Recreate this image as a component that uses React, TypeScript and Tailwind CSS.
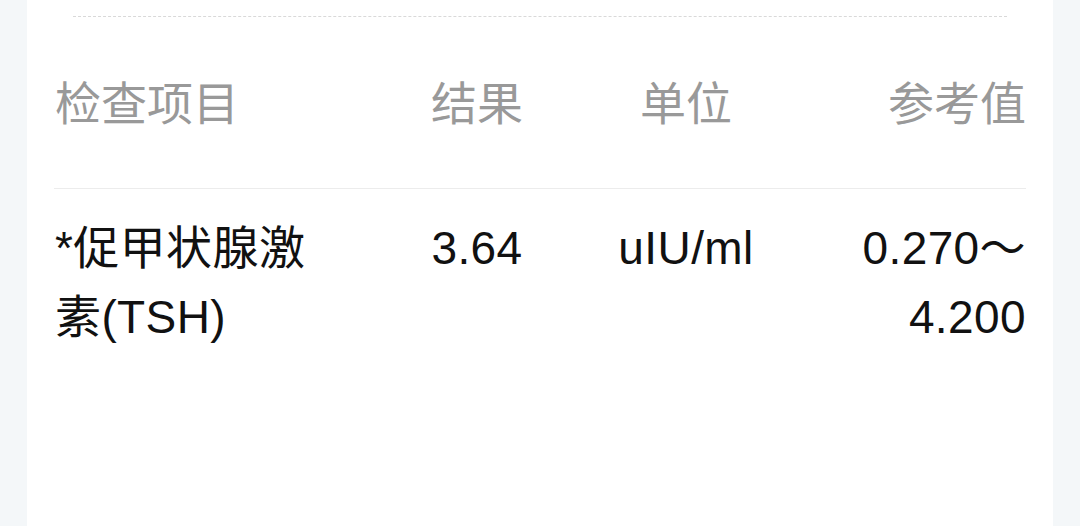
const FONT = "font-['Liberation_Sans','Noto_Sans_CJK_SC',sans-serif]";

export default function App(): React.JSX.Element {
  return (
    <div className={`flex h-[526px] w-[1080px] justify-center overflow-hidden bg-[#f4f7f9] ${FONT}`}>
      <div className="h-full w-[1026px] bg-white px-[27px]">
        <div className="mx-[19px] mt-4 border-t border-dashed border-[#d9d9d9]" />

        <div className="grid h-[172px] grid-cols-[292px_262px_156px_1fr] items-center border-b border-[#ececec] pt-[3px] text-[46px] leading-[60px] text-[#999999]">
          <div className="pl-px">检查项目</div>
          <div className="text-center">结果</div>
          <div className="text-center">单位</div>
          <div className="text-right">参考值</div>
        </div>

        <div className="grid grid-cols-[292px_262px_156px_1fr] items-start pt-[25px] text-[46px] leading-[69px] tracking-[0.4px] text-[#111111]">
          <div className="pl-px">*促甲状腺激素(TSH)</div>
          <div className="text-center">3.64</div>
          <div className="text-center">uIU/ml</div>
          <div className="text-right">0.270～4.200</div>
        </div>
      </div>
    </div>
  );
}
